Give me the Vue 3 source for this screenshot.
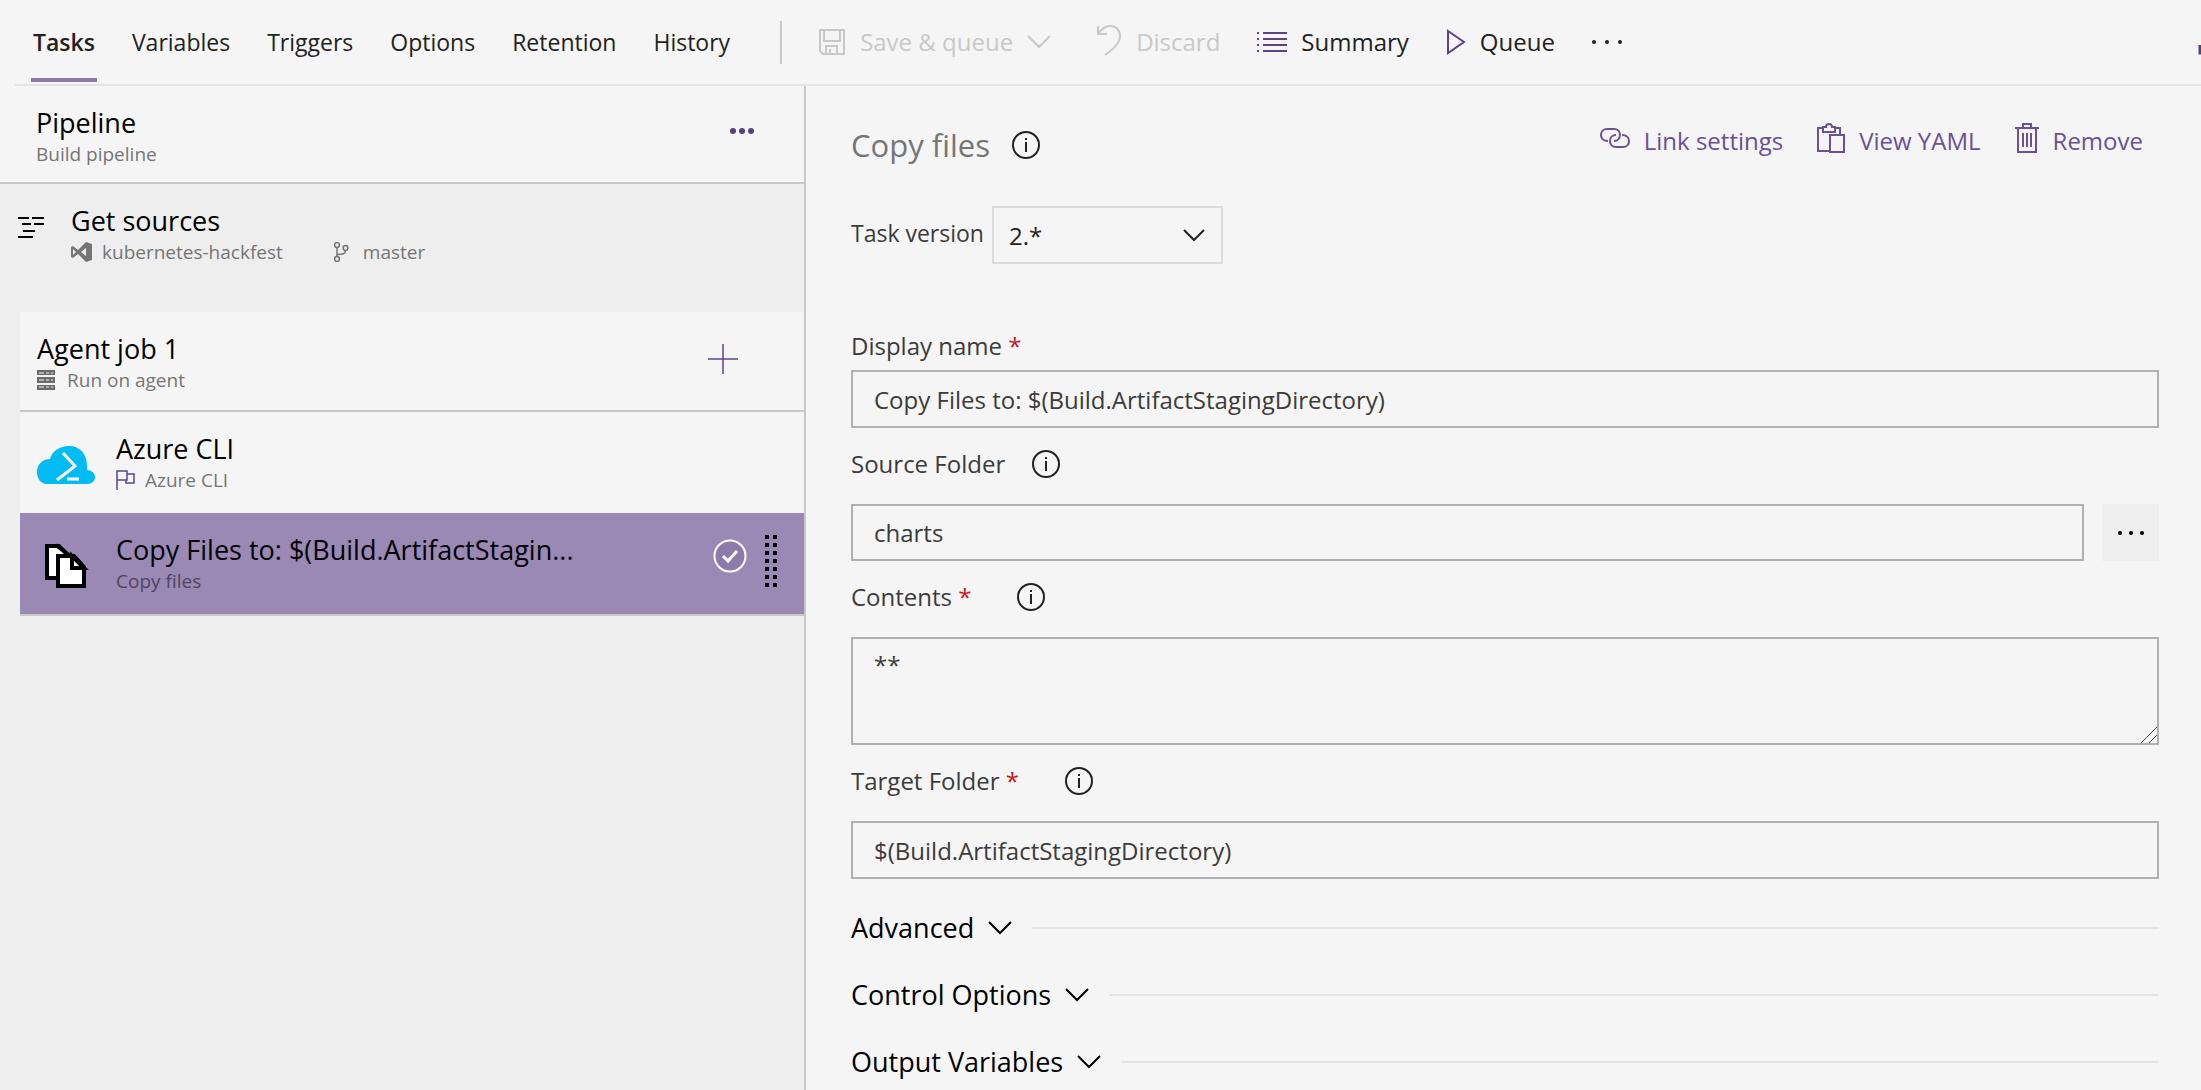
<script setup>
import { ref } from 'vue'

const tabs = ['Tasks', 'Variables', 'Triggers', 'Options', 'Retention', 'History']
const activeTab = ref('Tasks')
const version = ref('2.*')
const displayName = ref('Copy Files to: $(Build.ArtifactStagingDirectory)')
const sourceFolder = ref('charts')
const contents = ref('**')
const targetFolder = ref('$(Build.ArtifactStagingDirectory)')
const sections = ['Advanced', 'Control Options', 'Output Variables']
</script>

<template>
  <div class="editor">
    <header class="topbar">
      <nav class="tabs">
        <a
          v-for="tab in tabs"
          :key="tab"
          href="#"
          class="tab"
          :class="{ active: tab === activeTab }"
          @click.prevent="activeTab = tab"
        >{{ tab }}</a>
      </nav>
      <span class="divider"></span>
      <div class="commands">
        <button class="command save" disabled>
          <svg width="28" height="28" viewBox="0 0 28 28" fill="none" stroke="currentColor" stroke-width="2">
            <path d="M2 2H26V26H5L2 23Z M6 2V13H22V2 M8 26V18H19V26 M12 26V21" />
          </svg>
          Save &amp; queue
          <svg class="caret" width="24" height="14" viewBox="0 0 24 14" fill="none" stroke="currentColor" stroke-width="2">
            <path d="M1 1L12 12L23 1" />
          </svg>
        </button>
        <button class="command discard" disabled>
          <svg width="26" height="32" viewBox="0 0 26 32" fill="none" stroke="currentColor" stroke-width="2">
            <path d="M2 2V10H11 M2 10C6 4 10 2 14 2C20 2 24 6 24 12C24 20 16 26 9 31" />
          </svg>
          Discard
        </button>
        <button class="command summary">
          <svg class="purple" width="30" height="22" viewBox="0 0 30 22" fill="none" stroke="currentColor" stroke-width="2">
            <path d="M0 2H2M6 2H30M0 8H2M6 8H30M0 14H2M6 14H30M0 20H2M6 20H30" />
          </svg>
          Summary
        </button>
        <button class="command queue">
          <svg class="purple" width="20" height="26" viewBox="0 0 20 26" fill="none" stroke="currentColor" stroke-width="2">
            <path d="M2 2L18 13L2 24Z" />
          </svg>
          Queue
        </button>
        <button class="command" aria-label="More commands">
          <svg width="30" height="6" viewBox="0 0 30 6" fill="currentColor">
            <circle cx="2" cy="3" r="2" /><circle cx="15" cy="3" r="2" /><circle cx="28" cy="3" r="2" />
          </svg>
        </button>
      </div>
      <button class="fullscreen" aria-label="Full screen">
        <svg width="26" height="26" viewBox="0 0 26 26" fill="none" stroke="currentColor" stroke-width="3">
          <path d="M2 16V24H10M2 24L24 2M16 2H24V10" />
        </svg>
      </button>
    </header>

    <div class="body">
      <aside class="side">
        <section class="row pipeline">
          <div class="text">
            <h2>Pipeline</h2>
            <p>Build pipeline</p>
          </div>
          <button class="plain dots" aria-label="Pipeline menu">
            <svg width="24" height="6" viewBox="0 0 24 6" fill="currentColor">
              <circle cx="3" cy="3" r="3" /><circle cx="12" cy="3" r="3" /><circle cx="21" cy="3" r="3" />
            </svg>
          </button>
        </section>

        <section class="row sources">
          <svg class="sources-icon" width="26" height="24" viewBox="0 0 26 24" fill="none" stroke="#000" stroke-width="2">
            <path d="M0 2H11M14 2H26M4 8H13M16 8H26M5 15H17M0 21H15" />
          </svg>
          <div class="text">
            <h2>Get sources</h2>
            <p class="meta">
              <svg width="21" height="20" viewBox="0 0 21 20" fill="currentColor" fill-rule="evenodd">
                <path d="M15 0L21 2V18L15 20L7 12L2 16L0 15V5L2 4L7 8ZM15 6L10 10L15 14ZM2 7V13L5 10Z" />
              </svg>
              <span>kubernetes-hackfest</span>
              <svg class="branch" width="16" height="20" viewBox="0 0 16 20" fill="none" stroke="currentColor" stroke-width="1.5">
                <circle cx="4" cy="3" r="2.4" /><circle cx="4" cy="17" r="2.4" /><circle cx="12.5" cy="6" r="2.4" />
                <path d="M4 5.5V14.5M12.5 8.5C12.5 12 10 12.5 4 12.5" />
              </svg>
              <span>master</span>
            </p>
          </div>
        </section>

        <section class="job">
          <div class="row agent">
            <div class="text">
              <h2>Agent job 1</h2>
              <p class="meta">
                <svg width="18" height="20" viewBox="0 0 18 20">
                  <path d="M0 0H18V5H0ZM0 7H18V13H0ZM0 15H18V20H0Z" fill="#6b6b6b" />
                  <path d="M2 3H7M9 3H12M14 3H16M2 10H7M9 10H12M14 10H16M2 17H7M9 17H12M14 17H16" stroke="#f5f5f5" stroke-width="1" />
                </svg>
                <span>Run on agent</span>
              </p>
            </div>
            <button class="plain add" aria-label="Add a task">
              <svg width="30" height="30" viewBox="0 0 30 30" fill="none" stroke="currentColor" stroke-width="1.5">
                <path d="M15 0V30M0 15H30" />
              </svg>
            </button>
          </div>

          <div class="row task">
            <svg class="task-icon" width="58" height="38" viewBox="0 0 58 38">
              <path d="M10 38C4 38 0 33 0 26C0 19 5 13 13 13C15 5 23 0 32 0C43 0 50 8 50 20V24C54 24 58 27 58 31C58 35 55 38 50 38Z" fill="#00bcf2" />
              <path d="M26 7L38 20L20 34M30 33H42" fill="none" stroke="#fff" stroke-width="3" />
            </svg>
            <div class="text">
              <h2>Azure CLI</h2>
              <p class="meta">
                <svg class="purple" width="19" height="20" viewBox="0 0 19 20" fill="none" stroke="currentColor" stroke-width="1.5">
                  <path d="M1 20V1H11V10H1M11 4H18V13H10V10" />
                </svg>
                <span>Azure CLI</span>
              </p>
            </div>
          </div>

          <div class="row task selected">
            <svg class="task-icon" width="58" height="46" viewBox="0 0 58 46" fill="#fff" stroke="#000" stroke-width="4">
              <path d="M10 3H22L32 13V35H10Z" />
              <path d="M21 13H37L47 24V43H21Z" />
              <path d="M35 13V25H47Z" />
              <path d="M19 2L33 13" />
            </svg>
            <div class="text">
              <h2>Copy Files to: $(Build.ArtifactStagin...</h2>
              <p>Copy files</p>
            </div>
            <svg class="check" width="34" height="34" viewBox="0 0 34 34" fill="none" stroke="#fff">
              <circle cx="17" cy="17" r="15.5" stroke-width="2" fill="#8d7aab" />
              <path d="M10 17L15 22L24 12" stroke-width="3" />
            </svg>
            <svg class="grip" width="12" height="52" viewBox="0 0 12 52" fill="none" stroke="#000" stroke-width="4" stroke-dasharray="4 4">
              <path d="M2 0V52M10 0V52" />
            </svg>
          </div>
        </section>
      </aside>

      <main class="details">
        <div class="heading">
          <h1>Copy files</h1>
          <svg class="info" width="28" height="28" viewBox="0 0 28 28">
            <circle cx="14" cy="14" r="13" fill="none" stroke="currentColor" stroke-width="2" />
            <path d="M13 11H15V21H13ZM13 7H15V9H13Z" fill="currentColor" />
          </svg>
          <div class="actions">
            <a href="#" class="action link">
              <svg width="30" height="20" viewBox="0 0 30 20" fill="none" stroke="currentColor" stroke-width="2">
                <path d="M8 13C3 13 1 10 1 7C1 3 4 1 7 1H14C18 1 20 4 20 7C20 10 18 13 14 13" />
                <path d="M22 7C27 7 29 10 29 13C29 16 27 19 23 19H16C12 19 10 16 10 13C10 10 12 7 16 7" />
              </svg>
              Link settings
            </a>
            <a href="#" class="action yaml">
              <svg width="28" height="30" viewBox="0 0 28 30" fill="none" stroke="currentColor" stroke-width="2">
                <path d="M12 28H1V5H6M18 5H23V11" />
                <path d="M6 4V9H18V4H15C15 0 9 0 9 4Z" />
                <path d="M13 12H27V29H13Z" />
              </svg>
              View YAML
            </a>
            <a href="#" class="action remove">
              <svg width="24" height="30" viewBox="0 0 24 30" fill="none" stroke="currentColor" stroke-width="2">
                <path d="M0 5H24M8 5V1H16V5M3 5V29H21V5M8 10V24M12 10V24M16 10V24" />
              </svg>
              Remove
            </a>
          </div>
        </div>

        <div class="version">
          <label for="version">Task version</label>
          <div class="select">
            <select id="version" v-model="version">
              <option>2.*</option>
              <option>1.*</option>
            </select>
            <svg width="22" height="13" viewBox="0 0 22 13" fill="none" stroke="currentColor" stroke-width="2">
              <path d="M1 1L11 11L21 1" />
            </svg>
          </div>
        </div>

        <div class="field first">
          <div class="label"><label for="display-name">Display name <b>*</b></label></div>
          <input id="display-name" v-model="displayName" type="text" />
        </div>

        <div class="field">
          <div class="label">
            <label for="source-folder">Source Folder</label>
            <svg class="info" width="28" height="28" viewBox="0 0 28 28">
              <circle cx="14" cy="14" r="13" fill="none" stroke="currentColor" stroke-width="2" />
              <path d="M13 11H15V21H13ZM13 7H15V9H13Z" fill="currentColor" />
            </svg>
          </div>
          <div class="browse">
            <input id="source-folder" v-model="sourceFolder" type="text" />
            <button class="browse-button" aria-label="Browse">
              <svg width="26" height="4" viewBox="0 0 26 4" fill="#000">
                <circle cx="2" cy="2" r="2" /><circle cx="13" cy="2" r="2" /><circle cx="24" cy="2" r="2" />
              </svg>
            </button>
          </div>
        </div>

        <div class="field">
          <div class="label required">
            <label for="contents">Contents <b>*</b></label>
            <svg class="info" width="28" height="28" viewBox="0 0 28 28">
              <circle cx="14" cy="14" r="13" fill="none" stroke="currentColor" stroke-width="2" />
              <path d="M13 11H15V21H13ZM13 7H15V9H13Z" fill="currentColor" />
            </svg>
          </div>
          <div class="area">
            <textarea id="contents" v-model="contents"></textarea>
            <svg width="16" height="16" viewBox="0 0 16 16" fill="none" stroke="#444" stroke-width="1">
              <path d="M0 16L16 0M8 16L16 8" />
            </svg>
          </div>
        </div>

        <div class="field">
          <div class="label required">
            <label for="target-folder">Target Folder <b>*</b></label>
            <svg class="info" width="28" height="28" viewBox="0 0 28 28">
              <circle cx="14" cy="14" r="13" fill="none" stroke="currentColor" stroke-width="2" />
              <path d="M13 11H15V21H13ZM13 7H15V9H13Z" fill="currentColor" />
            </svg>
          </div>
          <input id="target-folder" v-model="targetFolder" type="text" />
        </div>

        <div class="sections">
          <button v-for="section in sections" :key="section" class="section">
            {{ section }}
            <svg width="24" height="14" viewBox="0 0 24 14" fill="none" stroke="currentColor" stroke-width="2">
              <path d="M1 1L12 12L23 1" />
            </svg>
            <span class="rule"></span>
          </button>
        </div>
      </main>
    </div>
  </div>
</template>

<style>
body {
  margin: 0;
  background: #f5f5f5;
}
</style>

<style scoped>
.editor {
  display: flex;
  flex-direction: column;
  min-height: 100vh;
  background: #f5f5f5;
  color: #3b3b3b;
  font-family: "Open Sans", "Noto Sans", sans-serif;
  font-size: 24px;
}
*,
*::before {
  box-sizing: border-box;
}
svg {
  display: block;
  flex: none;
}
h1,
h2,
p {
  margin: 0;
  font-weight: 400;
}
button,
input,
select,
textarea {
  font: inherit;
  color: inherit;
  border-radius: 0;
  margin: 0;
}
button {
  background: none;
  border: 0;
  padding: 0;
}
a {
  text-decoration: none;
}
.purple {
  color: #5c4487;
}

.topbar {
  display: flex;
  align-items: center;
  height: 86px;
  margin-left: 15px;
  padding-left: 16px;
  border-bottom: 2px solid #e4e4e4;
  overflow: hidden;
  white-space: nowrap;
}
.tabs {
  display: flex;
  gap: 33px;
  align-self: stretch;
}
.tab {
  height: 82px;
  padding: 0 2px;
  border-bottom: 4px solid transparent;
  color: #222;
  font-size: 23px;
  line-height: 84px;
}
.tab.active {
  border-color: #8e78ad;
  font-weight: 600;
}
.divider {
  width: 2px;
  height: 43px;
  margin: 0 36px 0 48px;
  background: #c8c8c8;
}
.commands {
  display: flex;
  align-items: center;
  gap: 37px;
}
.command {
  display: flex;
  align-items: center;
  gap: 14px;
  color: #222;
  line-height: 36px;
}
.command:disabled {
  color: #c8c8c8;
}
.discard {
  margin-left: 8px;
}
.discard svg {
  margin-bottom: 4px;
}
.fullscreen {
  margin: 0 -23px 0 auto;
  color: #54417a;
}

.body {
  display: flex;
  flex: 1;
}
.side {
  flex: 0 0 806px;
  background: #eee;
  border-right: 2px solid #c8c8c8;
}
.row {
  display: flex;
  align-items: flex-start;
  padding-top: 20px;
}
.text {
  flex: 1;
  white-space: nowrap;
}
.text h2 {
  color: #000;
  font-size: 27px;
  line-height: 34px;
}
.text p {
  color: #757575;
  font-size: 19px;
  line-height: 28px;
}
.meta {
  display: flex;
  align-items: center;
}
.meta span {
  margin-left: 10px;
}
.pipeline {
  height: 98px;
  padding-left: 36px;
  padding-right: 50px;
  background: #f5f5f5;
  border-bottom: 2px solid #c8c8c8;
}
.dots {
  margin-top: 22px;
  color: #54417a;
}
.sources {
  height: 128px;
  padding-left: 18px;
}
.sources-icon {
  margin: 12px 27px 0 0;
}
.meta .branch {
  margin-left: 50px;
}
.meta .branch + span {
  margin-left: 14px;
}
.job {
  margin-left: 20px;
  background: #f5f5f5;
  border-bottom: 2px solid #c8c8c8;
}
.agent {
  height: 100px;
  padding-left: 17px;
  padding-right: 66px;
  border-bottom: 2px solid #c8c8c8;
}
.agent .meta span {
  margin-left: 12px;
}
.add {
  margin-top: 12px;
  color: #5c4487;
}
.task {
  height: 101px;
  padding-left: 17px;
  padding-right: 27px;
}
.task-icon {
  margin: 14px 21px 0 0;
}
.selected {
  background: #9a89b5;
}
.selected .task-icon {
  margin-top: 10px;
}
.selected p {
  color: #4d4560;
}
.check {
  margin-top: 6px;
}
.grip {
  margin: 2px 0 0 18px;
}

.details {
  flex: 1;
  min-width: 0;
  padding: 37px 42px 0 45px;
}
.heading {
  display: flex;
  align-items: center;
  height: 44px;
}
.heading h1 {
  margin-right: 22px;
  color: #767676;
  font-size: 31px;
  line-height: 44px;
}
.info {
  color: #222;
}
.actions {
  display: flex;
  align-self: flex-start;
  gap: 34px;
  margin-left: auto;
  margin-right: 16px;
}
.action {
  display: flex;
  align-items: center;
  gap: 14px;
  color: #6b5093;
  line-height: 36px;
}
.action svg {
  margin-bottom: 6px;
}
.version {
  display: flex;
  align-items: center;
  gap: 8px;
  margin-top: 39px;
}
.version label {
  padding-bottom: 4px;
  font-size: 23px;
}
.select {
  position: relative;
  width: 231px;
  color: #222;
}
.select select {
  width: 100%;
  height: 58px;
  padding: 0 15px;
  appearance: none;
  background: transparent;
  border: 2px solid #dcdcdc;
}
.select svg {
  position: absolute;
  top: 23px;
  right: 18px;
  pointer-events: none;
}
.label {
  display: flex;
  align-items: center;
  gap: 27px;
  height: 34px;
  margin: 19px 0 23px;
  line-height: 34px;
}
.label.required {
  gap: 46px;
}
.label b {
  color: #c4161c;
  font-weight: 400;
}
.first .label {
  margin: 65px 0 7px;
}
input,
textarea {
  display: block;
  width: 100%;
  height: 58px;
  padding: 0 21px;
  background: transparent;
  border: 2px solid #b0b0b0;
}
.browse {
  display: flex;
  gap: 18px;
}
.browse input,
.browse-button {
  height: 57px;
}
.browse-button {
  display: flex;
  flex: 0 0 57px;
  align-items: center;
  justify-content: center;
  background: #eee;
}
.area {
  position: relative;
}
.area textarea {
  height: 108px;
  padding-top: 9px;
  resize: none;
  line-height: 34px;
}
.area svg {
  position: absolute;
  right: 2px;
  bottom: 2px;
}
.sections {
  display: flex;
  flex-direction: column;
  gap: 29px;
  margin-top: 30px;
}
.section {
  display: flex;
  align-items: center;
  gap: 14px;
  color: #000;
  font-size: 27px;
  line-height: 38px;
}
.rule {
  flex: 1;
  height: 2px;
  margin-left: 6px;
  background: #e4e4e4;
}
</style>
